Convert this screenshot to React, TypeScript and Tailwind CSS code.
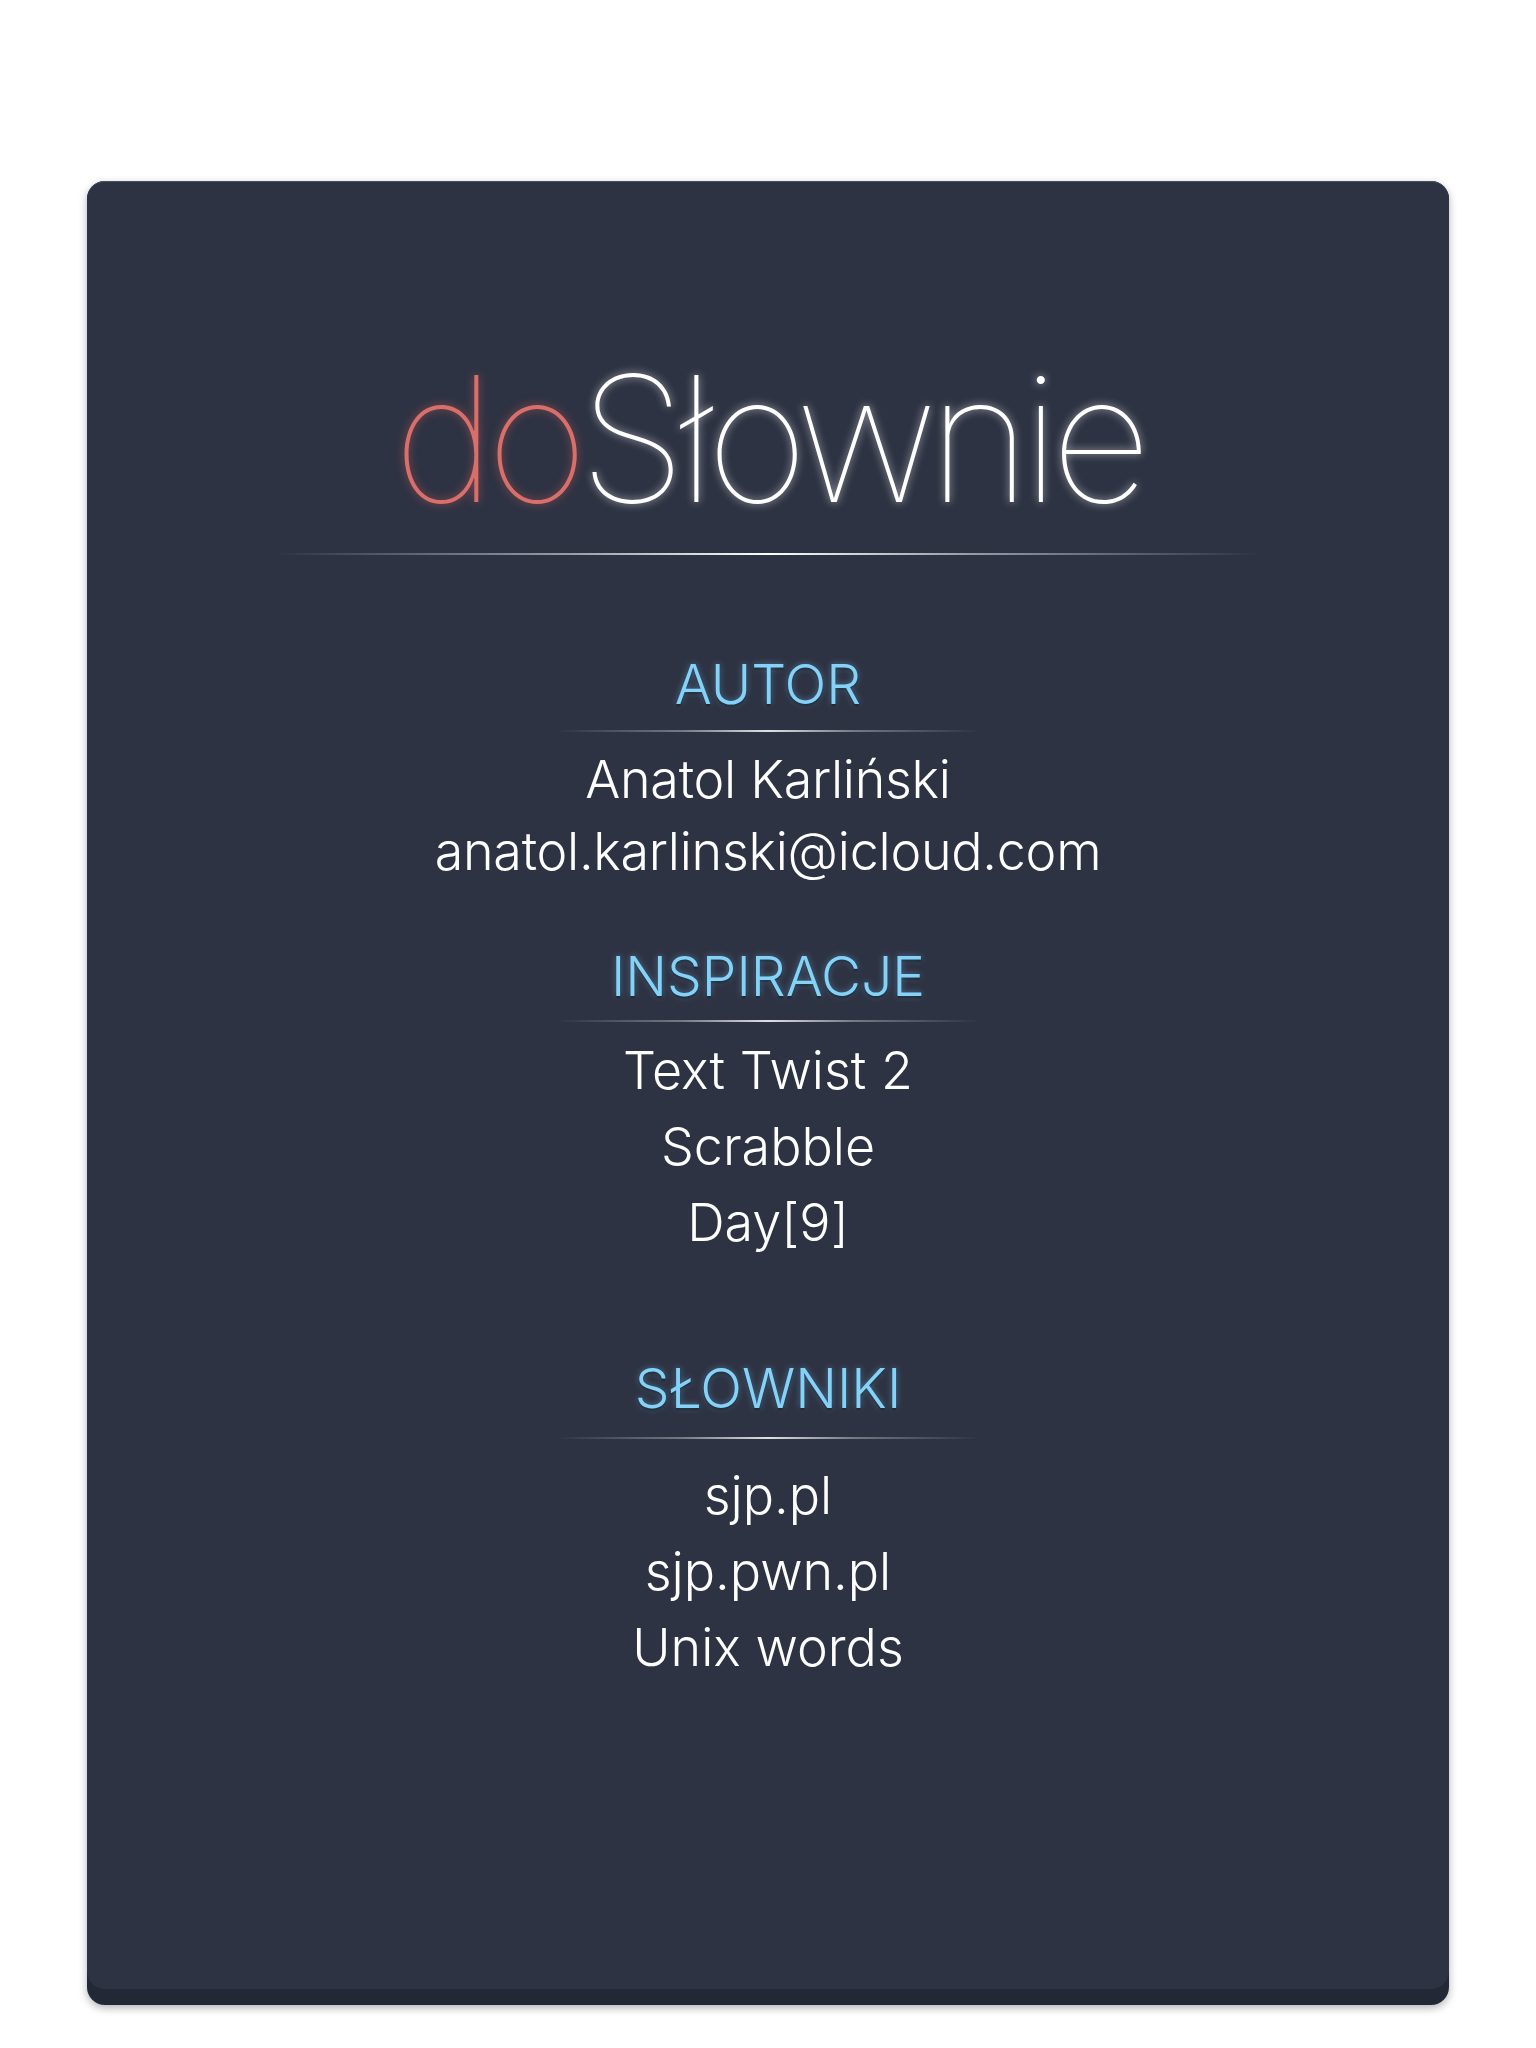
const items = {
  author: ["Anatol Karliński", "anatol.karlinski@icloud.com"],
  inspirations: ["Text Twist 2", "Scrabble", "Day[9]"],
  dictionaries: ["sjp.pl", "sjp.pwn.pl", "Unix words"],
};

function Divider({ className }: { className: string }) {
  return (
    <div
      className={`h-[2px] w-[424px] bg-[linear-gradient(to_right,rgba(255,255,255,0),rgba(255,255,255,0.35)_30%,rgba(255,255,255,0.85)_50%,rgba(255,255,255,0.35)_70%,rgba(255,255,255,0))] ${className}`}
    />
  );
}

function Heading({ children, className }: { children: React.ReactNode; className: string }) {
  return (
    <h2
      className={`text-[55px] leading-[60px] font-light text-[#84d2f7] [text-shadow:0_0_6px_rgba(120,200,255,0.45),0_2px_2px_rgba(0,0,0,0.55)] ${className}`}
    >
      {children}
    </h2>
  );
}

export default function App() {
  return (
    <div className="min-h-screen bg-white px-[87px] pt-[181px] font-['Inter','Liberation_Sans',sans-serif]">
      <div className="rounded-[18px] bg-[#232837] pb-4 shadow-[0_3px_9px_rgba(0,0,0,0.3)]">
        <div className="flex h-[1808px] flex-col items-center rounded-[18px] border-t border-[#4b5061] bg-[#2e3343] text-white">
          <h1 className="mt-[169px] text-[175px] leading-none font-thin tracking-[-0.05em]">
            <span className="text-[#d96f6b] [text-shadow:0_0_8px_rgba(230,100,95,0.55)]">do</span>
            <span className="[text-shadow:0_0_8px_rgba(255,255,255,0.6)]">Słownie</span>
          </h1>
          <div className="mt-[27px] h-[2px] w-[986px] bg-[linear-gradient(to_right,rgba(255,255,255,0),rgba(190,193,200,0.75)_30%,rgba(255,255,255,1)_50%,rgba(190,193,200,0.75)_70%,rgba(255,255,255,0))]" />

          <Heading className="mt-[99px]">AUTOR</Heading>
          <Divider className="mt-[16px]" />
          <div className="mt-[12px] flex flex-col items-center text-[52px] leading-[72px] font-light tracking-[-0.005em]">
            {items.author.map((line) => (
              <p key={line}>{line}</p>
            ))}
          </div>

          <Heading className="mt-[58px]">INSPIRACJE</Heading>
          <Divider className="mt-[14px]" />
          <div className="mt-[11px] flex flex-col items-center text-[52px] leading-[76px] font-light">
            {items.inspirations.map((line) => (
              <p key={line}>{line}</p>
            ))}
          </div>

          <Heading className="mt-[97px]">SŁOWNIKI</Heading>
          <Divider className="mt-[19px]" />
          <div className="mt-[19px] flex flex-col items-center text-[52px] leading-[76px] font-light">
            {items.dictionaries.map((line) => (
              <p key={line}>{line}</p>
            ))}
          </div>
        </div>
      </div>
    </div>
  );
}
